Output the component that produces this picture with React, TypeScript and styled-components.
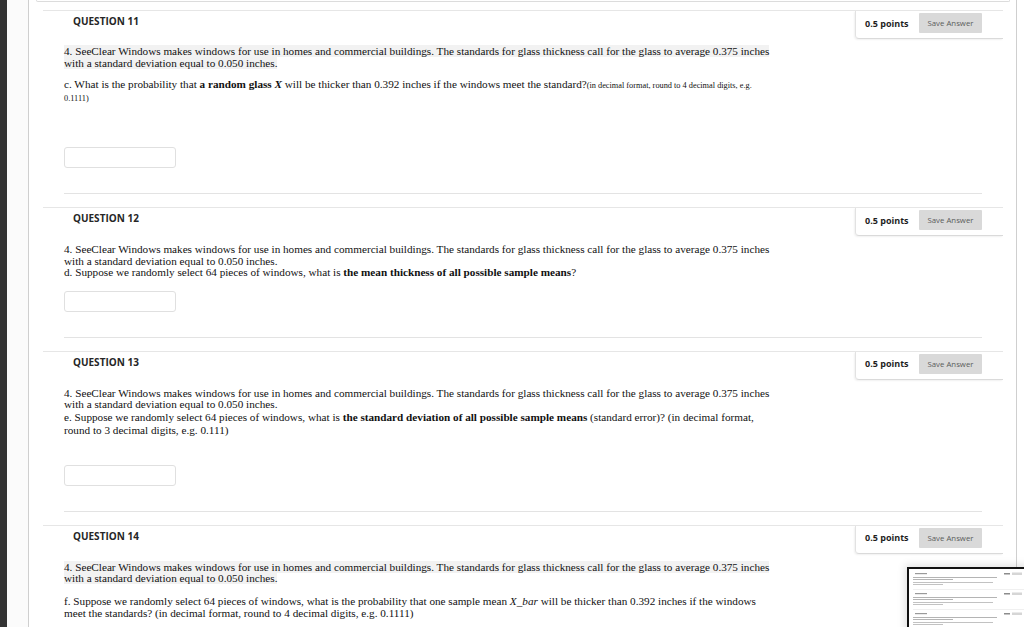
import React from 'react'
import styled, { createGlobalStyle } from 'styled-components'

const GlobalStyle = createGlobalStyle`
  html, body {
    margin: 0;
    padding: 0;
    background: #ffffff;
  }
  body {
    width: 1024px;
    height: 627px;
    overflow: hidden;
  }
`

const Page = styled.div`
  display: flex;
  height: 627px;
  width: 1024px;
  position: relative;
  overflow: hidden;
`

const DarkStrip = styled.div`
  width: 7px;
  background: #333333;
  flex-shrink: 0;
`

const Gutter = styled.div`
  width: 21px;
  background: #fbfbfb;
  border-right: 1px solid #cfcfcf;
  flex-shrink: 0;
`

const Main = styled.div`
  width: 974px;
  padding: 0 6px 0 7px;
  border-right: 1px solid #cfcfcf;
  flex-shrink: 0;
`

const PrevBox = styled.div`
  height: 1px;
  border: 1px solid #dcdcdc;
  border-top: none;
  border-radius: 0 0 3px 3px;
`

const QuestionList = styled.div`
  padding: 8px 7px 0 7px;
  display: flex;
  flex-direction: column;
  gap: 13px;
`

const QuestionBlock = styled.section`
  border-top: 1px solid #e6e6e6;
`

const Header = styled.div`
  display: flex;
  justify-content: space-between;
  align-items: flex-start;
  height: 28px;
`

const Title = styled.h3`
  margin: 0;
  padding: 3px 0 0 30px;
  font-family: 'Open Sans', 'Liberation Sans', sans-serif;
  font-size: 10px;
  font-weight: 700;
  color: #262626;
  line-height: 14px;
`

const PointsBox = styled.div`
  display: flex;
  align-items: center;
  gap: 11px;
  width: 117px;
  height: 20px;
  padding: 2px 21px 5px 9px;
  border-left: 1px solid #e2e2e2;
  border-bottom: 1px solid #dadada;
  border-bottom-left-radius: 4px;
  box-shadow: -1px 1px 2px rgba(0, 0, 0, 0.06);
`

const Points = styled.span`
  font-family: 'Open Sans', 'Liberation Sans', sans-serif;
  font-size: 9px;
  font-weight: 700;
  color: #1e1e1e;
  white-space: nowrap;
  width: 43px;
`

const SaveButton = styled.button`
  width: 63px;
  height: 20px;
  padding: 0;
  border: none;
  border-radius: 1px;
  background: #d9d9d9;
  font-family: 'Open Sans', 'Liberation Sans', sans-serif;
  font-size: 7.8px;
  color: #5c5c5c;
  white-space: nowrap;
`

const Body = styled.div<{ $top: number }>`
  margin: ${({ $top }) => $top}px 21px 0 21px;
  padding-bottom: 25px;
  border-bottom: 1px solid #e3e3e3;
`

const Text = styled.div`
  width: 712px;
  font-family: 'Liberation Serif', 'Times New Roman', serif;
  font-size: 11.2px;
  color: #111111;
`

const Para = styled.p<{ $gap?: number; $lh?: number }>`
  margin: 0 0 ${({ $gap }) => $gap ?? 0}px 0;
  line-height: ${({ $lh }) => $lh ?? 11.5}px;
`

const Shade = styled.span<{ $on?: boolean }>`
  background: ${({ $on }) => ($on ? '#f2f2f2' : 'transparent')};
`

const Small = styled.span`
  font-size: 8.3px;
`

const AnswerInput = styled.input<{ $top: number }>`
  display: block;
  box-sizing: border-box;
  width: 112px;
  height: 21px;
  margin-top: ${({ $top }) => $top}px;
  border: 1px solid #e0e0e0;
  border-radius: 3px;
  background: #ffffff;
  outline: none;
`

const Thumb = styled.div`
  position: absolute;
  left: 907px;
  top: 567px;
  width: 130px;
  height: 80px;
  border: 2px solid #111111;
  background: #ffffff;
  box-shadow: -2px -2px 8px rgba(0, 0, 0, 0.12);
`

const intro =
  '4. SeeClear Windows makes windows for use in homes and commercial buildings. The standards for glass thickness call for the glass to average 0.375 inches with a standard deviation equal to 0.050 inches.'

const QuestionHeader: React.FC<{ num: number }> = ({ num }) => (
  <Header>
    <Title>QUESTION {num}</Title>
    <PointsBox>
      <Points>0.5 points</Points>
      <SaveButton type="button">Save Answer</SaveButton>
    </PointsBox>
  </Header>
)

const Thumbnail: React.FC = () => {
  const rows = [4, 24, 44, 64]
  return (
    <Thumb>
      <svg width="130" height="80" viewBox="0 0 130 80">
        {rows.map((y) => (
          <g key={y}>
            <rect x="6" y={y} width="12" height="1.2" fill="#9a9a9a" />
            <rect x="95" y={y} width="6" height="1.5" fill="#8c8c8c" />
            <rect x="103" y={y - 0.5} width="10" height="2.5" fill="#d6d6d6" />
            <rect x="4" y={y + 4} width="84" height="1" fill="#b4b4b4" />
            <rect x="4" y={y + 6} width="40" height="1" fill="#b4b4b4" />
            <rect x="4" y={y + 9} width="80" height="1" fill="#c2c2c2" />
            <rect x="4" y={y + 11} width="30" height="1" fill="#c2c2c2" />
            <rect x="4" y={y + 16} width="112" height="0.6" fill="#e6e6e6" />
          </g>
        ))}
      </svg>
    </Thumb>
  )
}

export default function App() {
  return (
    <>
      <GlobalStyle />
      <Page>
        <DarkStrip />
        <Gutter />
        <Main>
          <PrevBox />
          <QuestionList>
            <QuestionBlock>
              <QuestionHeader num={11} />
              <Body $top={7}>
                <Text>
                  <Para $gap={10}>
                    <Shade $on>{intro}</Shade>
                  </Para>
                  <Para>
                    c. What is the probability that{' '}
                    <b>
                      a random glass <i>X</i>
                    </b>{' '}
                    will be thicker than 0.392 inches if the windows meet the
                    standard?
                    <Small>
                      (in decimal format, round to 4 decimal digits, e.g.
                      0.1111)
                    </Small>
                  </Para>
                </Text>
                <AnswerInput $top={43} />
              </Body>
            </QuestionBlock>

            <QuestionBlock>
              <QuestionHeader num={12} />
              <Body $top={8}>
                <Text>
                  <Para>{intro}</Para>
                  <Para>
                    d. Suppose we randomly select 64 pieces of windows, what is{' '}
                    <b>the mean thickness of all possible sample means</b>?
                  </Para>
                </Text>
                <AnswerInput $top={12} />
              </Body>
            </QuestionBlock>

            <QuestionBlock>
              <QuestionHeader num={13} />
              <Body $top={8}>
                <Text>
                  <Para>{intro}</Para>
                  <Para $lh={13}>
                    e. Suppose we randomly select 64 pieces of windows, what is{' '}
                    <b>the standard deviation of all possible sample means</b>{' '}
                    (standard error)? (in decimal format, round to 3 decimal
                    digits, e.g. 0.111)
                  </Para>
                </Text>
                <AnswerInput $top={28} />
              </Body>
            </QuestionBlock>

            <QuestionBlock>
              <QuestionHeader num={14} />
              <Body $top={8}>
                <Text>
                  <Para $gap={10}>
                    <Shade $on>{intro}</Shade>
                  </Para>
                  <Para $lh={12}>
                    f. Suppose we randomly select 64 pieces of windows, what is
                    the probability that one sample mean <i>X_bar</i> will be
                    thicker than 0.392 inches if the windows meet the standards?
                    (in decimal format, round to 4 decimal digits, e.g. 0.1111)
                  </Para>
                </Text>
                <AnswerInput $top={30} />
              </Body>
            </QuestionBlock>
          </QuestionList>
        </Main>
        <Thumbnail />
      </Page>
    </>
  )
}
